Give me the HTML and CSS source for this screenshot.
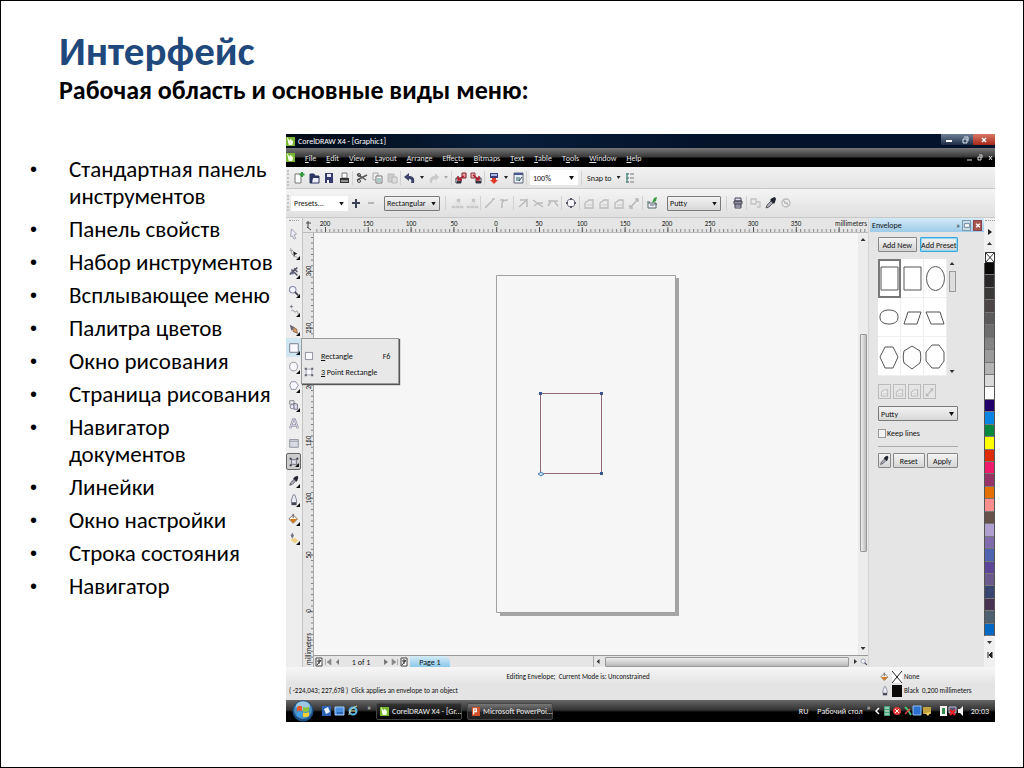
FILE: index.html
```html
<!DOCTYPE html>
<html lang="ru">
<head>
<meta charset="utf-8">
<title>Интерфейс</title>
<link rel="stylesheet" href="styles.css">
</head>
<body>
<svg class="sprite" aria-hidden="true">
  <symbol id="new" viewBox="0 0 14 14"><path d="M3 3h6v9H3z" fill="#fff" stroke="#777"/><path d="M10 1v5M7.500 3.500h5" stroke="#2c9a35" stroke-width="2"/></symbol>
  <symbol id="open" viewBox="0 0 14 14"><path d="M3 12V3h4l1 2h4v7z" fill="#2b3560"/><path d="M6 7h6v5H5z" fill="#eef"/><path d="M3 12V3h4l1 2h4v7z" fill="none" stroke="#2b3560"/></symbol>
  <symbol id="save" viewBox="0 0 14 14"><path d="M3 2h8v10H3z" fill="#33386e"/><path d="M5 3h4v3H5z" fill="#e8e8f5"/><path d="M5 9h2v3H5z" fill="#fff"/></symbol>
  <symbol id="print" viewBox="0 0 14 14"><path d="M5 2h5v5H5z" fill="#fff" stroke="#777"/><path d="M3 7h9v5H3z" fill="#333"/><path d="M4 10h7" stroke="#eee"/></symbol>
  <symbol id="cut" viewBox="0 0 14 14"><path d="M2 3l9 6M2 9l10-5" stroke="#555" stroke-width="1.500"/><circle cx="4" cy="4" r="1.500" fill="none" stroke="#444"/><circle cx="4" cy="10" r="1.500" fill="none" stroke="#444"/></symbol>
  <symbol id="copy" viewBox="0 0 14 14"><path d="M3 2h5v7H3z" fill="#eee" stroke="#aaa"/><path d="M6 5h6v7H6z" fill="#fff" stroke="#777"/><path d="M7 8h4M7 10h4" stroke="#4a9a8a"/></symbol>
  <symbol id="paste" viewBox="0 0 14 14"><path d="M3 3h6v8H3z" fill="#ccc" stroke="#bbb"/><path d="M7 6h5v6H7z" fill="#ddd" stroke="#b8b8b8"/></symbol>
  <symbol id="undo" viewBox="0 0 14 14"><path d="M1 6l5-4v3c4 0 6 2 5 7h-3c1-3 0-4-2-4v2z" fill="#3a4468"/></symbol>
  <symbol id="redo" viewBox="0 0 14 14"><path d="M12 6L8 2v3C4 5 2 7 3 12h2c0-3 1-4 3-4v2z" fill="#c8cacc"/></symbol>
  <symbol id="import" viewBox="0 0 14 14"><path d="M2 7h5v5H2z" fill="#fff" stroke="#334"/><path d="M8 2h4v5H8z" fill="#f0a0a4" stroke="#70202a"/><path d="M10 5L4 9M4 5v4h4" fill="none" stroke="#b01824" stroke-width="1.500"/><path d="M3 10h4v2H3z" fill="#334"/></symbol>
  <symbol id="export" viewBox="0 0 14 14"><path d="M7 7h5v5H7z" fill="#fff" stroke="#334"/><path d="M2 2h4v5H2z" fill="#f0b4b8" stroke="#8a303a"/><path d="M4 4l6 5M10 5v4H7" fill="none" stroke="#b01824" stroke-width="1.500"/><path d="M7 10h5v2H7z" fill="#334"/></symbol>
  <symbol id="launch" viewBox="0 0 14 14"><path d="M3 2h8v5H3z" fill="#3a3f78"/><path d="M4 3h6v2H4z" fill="#aabbe0"/><path d="M5 7h4v2h2l-4 4-4-4h2z" fill="#e03a28"/></symbol>
  <symbol id="corel" viewBox="0 0 14 14"><path d="M3 2h9v10H3z" fill="#e8edf7" stroke="#667"/><path d="M3 2h9v2H3z" fill="#4a5890"/><path d="M5 6h4v4H5z" fill="#8aa"/><path d="M8 10l3-4" stroke="#345"/></symbol>
  <symbol id="opts" viewBox="0 0 14 14"><path d="M3 3h3M3 7h3M3 11h3M4 2v10" stroke="#5f8f88" stroke-width="1.500"/><path d="M7 3h4M7 7h4M7 11h4" stroke="#777"/></symbol>
  <symbol id="plus" viewBox="0 0 14 14"><path d="M7 3v9M3 7h8" stroke="#3c4055" stroke-width="2"/></symbol>
  <symbol id="minus" viewBox="0 0 14 14"><path d="M4 7h6" stroke="#b5b5b5" stroke-width="2"/></symbol>
  <symbol id="node" viewBox="0 0 14 14"><path d="M2 10h3v2H2zM6 10h3v2H6zM10 10h3v2h-3zM3 11h9M7 3h3v3H7zM5 8h6" fill="#c4c4c4" stroke="#ccc" stroke-width=".6"/></symbol>
  <symbol id="line" viewBox="0 0 14 14"><path d="M3 11l7-7M2 11h2M9 3h3" stroke="#bbb" stroke-width="1.500"/></symbol>
  <symbol id="curve" viewBox="0 0 14 14"><path d="M4 12V8c0-3 2-4 6-4M2 4h4" fill="none" stroke="#bbb" stroke-width="1.500"/></symbol>
  <symbol id="cusp" viewBox="0 0 14 14"><path d="M3 11l8-7v7M4 4h7" fill="none" stroke="#bbb" stroke-width="1.500"/></symbol>
  <symbol id="smooth" viewBox="0 0 14 14"><path d="M2 4l4 3 6 4M3 10l4-3h5" fill="none" stroke="#bbb" stroke-width="1.500"/></symbol>
  <symbol id="sym" viewBox="0 0 14 14"><path d="M2 5h10M2 10l3-5M12 10L8 5" fill="none" stroke="#bbb" stroke-width="1.500"/></symbol>
  <symbol id="tocurve" viewBox="0 0 14 14"><circle cx="7" cy="7" r="4" fill="#f6f6fa" stroke="#778"/><path d="M6 2h2v2H6zM6 10h2v2H6zM2 6h2v2H2zM10 6h2v2h-2z" fill="#556"/></symbol>
  <symbol id="env" viewBox="0 0 14 14"><path d="M3 12V7l4-3h4v8z" fill="#eaeaea" stroke="#bcbcbc" stroke-width="1.300"/><path d="M5 9h6" stroke="#c8c8c8"/></symbol>
  <symbol id="envline" viewBox="0 0 14 14"><path d="M4 11l6-7M3 9v3h3M8 3h3v3" fill="none" stroke="#b8b8b8" stroke-width="1.500"/></symbol>
  <symbol id="keep" viewBox="0 0 14 14"><path d="M3 7v5h8V7zM2 6h3M9 8h3M5 9h4" fill="#eef" stroke="#566"/><path d="M7 7l2-5 3-1-1 4z" fill="#39983d"/></symbol>
  <symbol id="copyenv" viewBox="0 0 14 14"><path d="M4 2h6v3H4zM3 5h8v3H3zM4 8h6v4H4z" fill="#dde" stroke="#445"/><path d="M3 6h8M4 10h6" stroke="#445"/></symbol>
  <symbol id="copygray" viewBox="0 0 14 14"><path d="M2 3h5v5H2zM7 6h4v5H8" fill="none" stroke="#c2c2c2" stroke-width="1.300"/></symbol>
  <symbol id="dropper" viewBox="0 0 14 14"><path d="M2 12l1-3 4-4 2 2-4 4z" fill="#aab" stroke="#444" stroke-width=".8"/><path d="M6 4l4 4 1-2 1-3-1-2-3 1z" fill="#20242e"/></symbol>
  <symbol id="clear" viewBox="0 0 14 14"><circle cx="7" cy="7" r="4" fill="#eee" stroke="#bbb" stroke-width="1.300"/><path d="M4 4l6 6M5 7h4" stroke="#bbb" stroke-width="1.300"/></symbol>
  <symbol id="pick" viewBox="0 0 14 14"><path d="M4 1l6 6-3 1 2 4-2 1-2-4-2 1z" fill="#eef" stroke="#99a"/></symbol>
  <symbol id="shape" viewBox="0 0 14 14"><path d="M3 1l1 5c1 4 3 5 7 6M2 4h4" fill="none" stroke="#999"/><path d="M6 5l5 3-3 1-1 3z" fill="#222"/></symbol>
  <symbol id="crop" viewBox="0 0 14 14"><path d="M2 10l4-4 5-4M4 4l7 7M7 3l4 4" stroke="#556" stroke-width="1.800"/><circle cx="5" cy="8" r="2" fill="#668"/></symbol>
  <symbol id="zoom" viewBox="0 0 14 14"><circle cx="5.500" cy="5.500" r="3.800" fill="#f3f6ff" stroke="#88a" stroke-width="1.200"/><path d="M8 8l4 4" stroke="#445" stroke-width="2"/></symbol>
  <symbol id="free" viewBox="0 0 14 14"><path d="M2 3h4M4 1v4M4 8c3-3 3 3 5 1s2 0 3 3" fill="none" stroke="#778"/></symbol>
  <symbol id="smart" viewBox="0 0 14 14"><path d="M2 2l6 3-4 4z" fill="#667"/><path d="M6 5l4 2 1 5-5-2z" fill="#d09a60" stroke="#865"/></symbol>
  <symbol id="rect" viewBox="0 0 14 14"><path d="M2 2h10v10H2z" fill="#f8f8ff" stroke="#6d7080"/></symbol>
  <symbol id="rect3" viewBox="0 0 14 14"><path d="M3 3h8v8H3z" fill="#f8f8ff" stroke="#8a8a98"/><path d="M1 1h3v3H1zM10 1h3v3h-3zM1 10h3v3H1zM10 10h3v3h-3z" fill="#667"/></symbol>
  <symbol id="ell" viewBox="0 0 14 14"><ellipse cx="6.500" cy="6.500" rx="4.500" ry="5" fill="#fafaff" stroke="#889"/></symbol>
  <symbol id="poly" viewBox="0 0 14 14"><path d="M4 2h5l3 4-3 5H4L2 6z" fill="#f7f7ff" stroke="#889"/></symbol>
  <symbol id="basic" viewBox="0 0 14 14"><path d="M2 2h5v4H2z" fill="#eee" stroke="#778"/><circle cx="5" cy="9" r="2.500" fill="#eef" stroke="#778"/><path d="M7 5l4 1v6H7z" fill="#dde" stroke="#667"/></symbol>
  <symbol id="text" viewBox="0 0 14 14"><path d="M2.500 12L6 2h2l3.500 10M4.500 9h5" fill="none" stroke="#889" stroke-width="2.600"/><path d="M2.500 12L6 2h2l3.500 10M4.500 9h5" fill="none" stroke="#eef"/></symbol>
  <symbol id="table" viewBox="0 0 14 14"><path d="M2 3h10v9H2z" fill="#d8dbe2" stroke="#889"/><path d="M2 5h10" stroke="#99a"/></symbol>
  <symbol id="blend" viewBox="0 0 14 14"><path d="M3 3c3 2 5 2 8 0-2 3-2 5 0 8-3-2-5-2-8 0 2-3 2-5 0-8z" fill="#e5e8ee" stroke="#556"/><path d="M2 2h2v2H2zM10 2h2v2h-2zM2 10h2v2H2z" fill="#334"/></symbol>
  <symbol id="pen" viewBox="0 0 14 14"><path d="M6 1h2l2 6v3H4V7z" fill="#e9ebf3" stroke="#778"/><path d="M4 10h6v3H4z" fill="#445"/></symbol>
  <symbol id="fill" viewBox="0 0 14 14"><path d="M6 2l5 5-5 5-5-5z" fill="#f8f3ec" stroke="#765"/><path d="M2 7h9l-5 5z" fill="#d07a20"/><path d="M6 1v5" stroke="#444"/></symbol>
  <symbol id="ifill" viewBox="0 0 14 14"><path d="M5 1l2 3-2 4-2-4z" fill="#778"/><path d="M3 9l5-2 4 3-4 3z" fill="#f0d080"/></symbol>
  <symbol id="cd" viewBox="0 0 10 12"><path d="M0 1h10v10H0z" fill="#78b832"/><path d="M1 1l3 4 1-2 3 3-1 4H3z" fill="#f5ffe8"/></symbol>
  <symbol id="page" viewBox="0 0 8 10"><path d="M1 1h6v8H1z" fill="#fff" stroke="#444"/><path d="M2 4h4M4 2v5M2 8l4-5" stroke="#333"/></symbol>
</svg>

<main class="slide">
  <header class="heading">
    <h1>Интерфейс</h1>
    <h2>Рабочая область и основные виды меню:</h2>
  </header>
  <div class="body">
    <ul class="topics">
      <li>Стандартная панель инструментов</li>
      <li>Панель свойств</li>
      <li>Набор инструментов</li>
      <li>Всплывающее меню</li>
      <li>Палитра цветов</li>
      <li>Окно рисования</li>
      <li>Страница рисования</li>
      <li>Навигатор документов</li>
      <li>Линейки</li>
      <li>Окно настройки</li>
      <li>Строка состояния</li>
      <li>Навигатор</li>
    </ul>

    <section class="app" aria-label="CorelDRAW X4">
      <div class="titlebar">
        <svg class="logo"><use href="#cd"/></svg>
        <span class="grow">CorelDRAW X4 - [Graphic1]</span>
        <div class="winbtns">
          <button aria-label="Minimize"><svg viewBox="0 0 10 8"><path d="M2 5h6" stroke="#fff" stroke-width="2"/></svg></button>
          <button aria-label="Restore"><svg viewBox="0 0 10 8"><path d="M4 1h4v4M3 3h4v4H3z" fill="none" stroke="#dfe8f4"/></svg></button>
          <button class="close" aria-label="Close"><svg viewBox="0 0 10 8"><path d="M3 2l4 4M7 2L3 6" stroke="#fff" stroke-width="1.500"/></svg></button>
        </div>
      </div>
      <nav class="menubar">
        <svg class="logo"><use href="#cd"/></svg>
        <button><u>F</u>ile</button><button><u>E</u>dit</button><button><u>V</u>iew</button><button><u>L</u>ayout</button><button><u>A</u>rrange</button><button>Effe<u>c</u>ts</button><button><u>B</u>itmaps</button><button><u>T</u>ext</button><button><u>T</u>able</button><button>T<u>o</u>ols</button><button><u>W</u>indow</button><button><u>H</u>elp</button>
        <svg class="docbtns" viewBox="0 0 30 10"><path d="M2 7h5M24 3l3 4M27 3l-3 4M13 4h3v3h-3zM14 2h3v3" fill="none" stroke="#ddd"/></svg>
      </nav>
      <div class="toolbar">
        <i class="grip"></i>
        <button class="tb" aria-label="New"><svg><use href="#new"/></svg></button><button class="tb" aria-label="Open"><svg><use href="#open"/></svg></button><button class="tb" aria-label="Save"><svg><use href="#save"/></svg></button><button class="tb" aria-label="Print"><svg><use href="#print"/></svg></button>
        <i class="sep"></i>
        <button class="tb" aria-label="Cut"><svg><use href="#cut"/></svg></button><button class="tb" aria-label="Copy"><svg><use href="#copy"/></svg></button><button class="tb" aria-label="Paste"><svg><use href="#paste"/></svg></button>
        <i class="sep"></i>
        <button class="tb" aria-label="Undo"><svg><use href="#undo"/></svg></button><i class="caret"></i><button class="tb" aria-label="Redo"><svg><use href="#redo"/></svg></button><i class="caret dim"></i>
        <i class="sep"></i>
        <button class="tb" aria-label="Import"><svg><use href="#import"/></svg></button><button class="tb" aria-label="Export"><svg><use href="#export"/></svg></button>
        <i class="sep"></i>
        <button class="tb" aria-label="Launcher"><svg><use href="#launch"/></svg></button><i class="caret"></i><button class="tb" aria-label="Welcome screen"><svg><use href="#corel"/></svg></button>
        <i class="sep"></i>
        <span class="combo plain zoomlevel"><select aria-label="Zoom level"><option>100%</option></select></span>
        <i class="sep"></i>
        <button class="snap">Snap to</button><i class="caret"></i>
        <button class="tb" aria-label="Options"><svg><use href="#opts"/></svg></button>
      </div>
      <div class="toolbar props">
        <i class="grip"></i>
        <span class="combo plain presets"><select aria-label="Preset list"><option>Presets...</option></select></span>
        <button class="tb" aria-label="Add preset"><svg><use href="#plus"/></svg></button><button class="tb" aria-label="Delete preset"><svg><use href="#minus"/></svg></button>
        <span class="combo mode"><select aria-label="Selection mode"><option>Rectangular</option></select></span>
        <i class="sep wide"></i>
        <button class="tb" aria-label="Add node"><svg><use href="#node"/></svg></button><button class="tb" aria-label="Delete node"><svg><use href="#node"/></svg></button>
        <i class="sep"></i>
        <button class="tb" aria-label="To line"><svg><use href="#line"/></svg></button><button class="tb" aria-label="To curve"><svg><use href="#curve"/></svg></button>
        <i class="sep"></i>
        <button class="tb" aria-label="Cusp"><svg><use href="#cusp"/></svg></button><button class="tb" aria-label="Smooth"><svg><use href="#smooth"/></svg></button><button class="tb" aria-label="Symmetrical"><svg><use href="#sym"/></svg></button>
        <i class="sep"></i>
        <button class="tb" aria-label="Convert to curves"><svg><use href="#tocurve"/></svg></button>
        <i class="sep"></i>
        <button class="tb" aria-label="Straight line mode"><svg><use href="#env"/></svg></button><button class="tb" aria-label="Single arc mode"><svg><use href="#env"/></svg></button><button class="tb" aria-label="Double arc mode"><svg><use href="#env"/></svg></button><button class="tb" aria-label="Unconstrained mode"><svg><use href="#envline"/></svg></button>
        <i class="sep"></i>
        <button class="tb" aria-label="Add new envelope"><svg><use href="#keep"/></svg></button>
        <span class="combo map"><select aria-label="Mapping mode"><option>Putty</option></select></span>
        <i class="sep wide"></i>
        <button class="tb" aria-label="Keep lines"><svg><use href="#copyenv"/></svg></button>
        <i class="sep"></i>
        <button class="tb" aria-label="Copy envelope"><svg><use href="#copygray"/></svg></button><button class="tb" aria-label="Create envelope from"><svg><use href="#dropper"/></svg></button><button class="tb" aria-label="Clear envelope"><svg><use href="#clear"/></svg></button>
      </div>

      <div class="workspace">
        <div class="toolbox">
          <i class="hgrip"></i>
          <button aria-label="Pick"><svg><use href="#pick"/></svg></button>
          <button class="more" aria-label="Shape"><svg><use href="#shape"/></svg></button>
          <button class="more" aria-label="Crop"><svg><use href="#crop"/></svg></button>
          <button class="more" aria-label="Zoom"><svg><use href="#zoom"/></svg></button>
          <button class="more" aria-label="Freehand"><svg><use href="#free"/></svg></button>
          <button class="more" aria-label="Smart fill"><svg><use href="#smart"/></svg></button>
          <div class="anchor">
            <button class="more active" aria-label="Rectangle tool"><svg><use href="#rect"/></svg></button>
            <div class="flyout">
              <button><svg><use href="#rect"/></svg><span><u>R</u>ectangle</span><kbd>F6</kbd></button>
              <button><svg><use href="#rect3"/></svg><span><u>3</u> Point Rectangle</span></button>
            </div>
          </div>
          <button class="more" aria-label="Ellipse"><svg><use href="#ell"/></svg></button>
          <button class="more" aria-label="Polygon"><svg><use href="#poly"/></svg></button>
          <button class="more" aria-label="Basic shapes"><svg><use href="#basic"/></svg></button>
          <button aria-label="Text"><svg><use href="#text"/></svg></button>
          <button aria-label="Table"><svg><use href="#table"/></svg></button>
          <button class="more pressed" aria-label="Interactive envelope"><svg><use href="#blend"/></svg></button>
          <button class="more" aria-label="Eyedropper"><svg><use href="#dropper"/></svg></button>
          <button class="more" aria-label="Outline"><svg><use href="#pen"/></svg></button>
          <button class="more" aria-label="Fill"><svg><use href="#fill"/></svg></button>
          <button class="more" aria-label="Interactive fill"><svg><use href="#ifill"/></svg></button>
        </div>

        <svg class="hruler">
          <defs>
            <pattern id="ht" x="22" y="0" width="4.280" height="15" patternUnits="userSpaceOnUse"><path d="M.5 11v3" stroke="#888"/></pattern>
            <pattern id="hm" x="22" y="0" width="42.800" height="15" patternUnits="userSpaceOnUse"><path d="M.5 9v5" stroke="#555"/></pattern>
          </defs>
          <path d="M3 5h5M5 3v7M4 9l4 3" fill="none" stroke="#444"/>
          <rect x="11" width="100%" height="15" fill="url(#ht)"/><rect x="11" width="100%" height="15" fill="url(#hm)"/>
          <g class="rl"><text x="22" y="8">200</text><text x="65" y="8">150</text><text x="108" y="8">100</text><text x="151" y="8">50</text><text x="193" y="8">0</text><text x="236" y="8">50</text><text x="279" y="8">100</text><text x="322" y="8">150</text><text x="364" y="8">200</text><text x="407" y="8">250</text><text x="450" y="8">300</text><text x="493" y="8">350</text><text x="548" y="8">millimeters</text></g>
        </svg>
        <svg class="vruler">
          <defs>
            <pattern id="vt" x="0" y="38" width="11" height="5.670" patternUnits="userSpaceOnUse"><path d="M8 .5h2" stroke="#777"/></pattern>
            <pattern id="vm" x="0" y="38" width="11" height="56.700" patternUnits="userSpaceOnUse"><path d="M5 .5h5" stroke="#777"/></pattern>
          </defs>
          <rect width="11" height="100%" fill="url(#vt)"/><rect width="11" height="100%" fill="url(#vm)"/>
          <path d="M10.500 0v2000" stroke="#aaa"/>
          <g class="rl"><text transform="translate(8 38) rotate(-90)">300</text><text transform="translate(8 95) rotate(-90)">250</text><text transform="translate(8 151) rotate(-90)">200</text><text transform="translate(8 208) rotate(-90)">150</text><text transform="translate(8 265) rotate(-90)">100</text><text transform="translate(8 322) rotate(-90)">50</text><text transform="translate(8 378) rotate(-90)">0</text><text transform="translate(8 416) rotate(-90)">millimeters</text></g>
        </svg>
        <svg class="canvas">
          <path d="M186 45h179v338H186z" fill="#a5a5a5"/>
          <path d="M182.500 42.500h179v337h-179z" fill="#f6f6f6" stroke="#a0a0a0"/>
          <path d="M226.500 160.500h61v80h-61z" fill="none" stroke="#8f6a78"/>
          <path d="M225 159h3v3h-3zM286 159h3v3h-3zM286 239h3v3h-3z" fill="#3b5590"/>
          <path d="M224 241l3-2 3 2-3 2z" fill="#bfe0f5" stroke="#4a80b0"/>
        </svg>
        <div class="vscroll"><i class="up"></i><i class="thumb"></i><i class="down"></i></div>
        <div class="navigator">
          <button aria-label="Add page before"><svg viewBox="0 0 8 10"><use href="#page"/></svg></button>
          <button aria-label="First page"><svg viewBox="0 0 8 10"><path d="M1.500 2v6M7 2v6L3 5z" fill="#888" stroke="#888" stroke-width=".6"/></svg></button>
          <button aria-label="Previous page"><svg viewBox="0 0 8 10"><path d="M6 2v6L3 5z" fill="#777"/></svg></button>
          <output>1 of 1</output>
          <button aria-label="Next page"><svg viewBox="0 0 8 10"><path d="M2 2v6l4-3z" fill="#777"/></svg></button>
          <button aria-label="Last page"><svg viewBox="0 0 8 10"><path d="M6.500 2v6M1 2v6l4-3z" fill="#888" stroke="#888" stroke-width=".6"/></svg></button>
          <button aria-label="Add page after"><svg viewBox="0 0 8 10"><use href="#page"/></svg></button>
          <button class="tab">Page 1</button>
          <i class="trough"></i>
          <i class="left"></i><i class="hthumb"></i><i class="right"></i>
          <button aria-label="Navigator"><svg viewBox="0 0 14 14"><use href="#zoom"/></svg></button>
        </div>

        <aside class="docker">
          <div class="dockhead"><span class="grow">Envelope</span><span>»</span><button aria-label="Roll up"><svg viewBox="0 0 8 10"><path d="M1 3h6v4H1z" fill="#fff" stroke="#5a7890"/></svg></button><button class="close" aria-label="Close"><svg viewBox="0 0 8 10"><path d="M2 3l4 4M6 3L2 7" stroke="#fff" stroke-width="1.500"/></svg></button></div>
          <div class="dockbody">
            <div class="pair"><button class="btn">Add New</button><button class="btn focus">Add Preset</button></div>
            <div class="gallery">
              <div class="shapes">
                <button class="chosen" aria-label="Rectangle"><svg viewBox="0 0 23 39"><path d="M3 8h17v23H3z"/></svg></button>
                <button aria-label="Box"><svg viewBox="0 0 23 39"><path d="M3 8h17v23H3z"/></svg></button>
                <button aria-label="Oval"><svg viewBox="0 0 23 39"><ellipse cx="11.500" cy="19.500" rx="9" ry="12"/></svg></button>
                <button aria-label="Rounded"><svg viewBox="0 0 23 39"><rect x="2" y="12" width="18" height="14" rx="8" ry="6"/></svg></button>
                <button aria-label="Slant right"><svg viewBox="0 0 23 39"><path d="M7 14h13l-4 12H3z"/></svg></button>
                <button aria-label="Slant left"><svg viewBox="0 0 23 39"><path d="M2 14h14l4 12H7z"/></svg></button>
                <button aria-label="Hexagon"><svg viewBox="0 0 23 39"><path d="M7 10h8l5 10-5 11H7L2 20z"/></svg></button>
                <button aria-label="Barrel"><svg viewBox="0 0 23 39"><path d="M11 9l8 5c1 4 1 8 0 12l-8 6-8-6c-1-4-1-8 0-12z"/></svg></button>
                <button aria-label="Octagon"><svg viewBox="0 0 23 39"><path d="M8 8h7l5 7v9l-5 7H8l-6-7v-9z"/></svg></button>
              </div>
              <div class="gscroll"><i class="up"></i><i class="thumb"></i><i class="down"></i></div>
            </div>
            <div class="modes"><button aria-label="Straight"><svg><use href="#env"/></svg></button><button aria-label="Arc"><svg><use href="#env"/></svg></button><button aria-label="Double arc"><svg><use href="#env"/></svg></button><button aria-label="Free"><svg><use href="#envline"/></svg></button></div>
            <span class="combo"><select aria-label="Mapping"><option>Putty</option></select></span>
            <label class="keep"><input type="checkbox">Keep lines</label>
            <hr>
            <div class="actions"><button class="btn pickbtn" aria-label="Pick from object"><svg><use href="#dropper"/></svg></button><button class="btn">Reset</button><button class="btn">Apply</button></div>
          </div>
        </aside>

        <div class="palette">
          <i class="hgrip"></i>
          <button class="pmenu" aria-label="Palette menu"><svg viewBox="0 0 10 12"><path d="M3 3v6l4-3z" fill="#222"/></svg></button>
          <i class="up"></i>
          <button class="none" aria-label="No colour"><svg viewBox="0 0 10 11"><path d="M.5.5h9v10h-9zl9 10M9.500.5l-9 10" fill="#fff" stroke="#333"/></svg></button>
          <div class="swatches">
            <i style="background:#0b0908"></i><i style="background:#2a2828"></i><i style="background:#3b3838"></i><i style="background:#4b4545"></i><i style="background:#5c5a5a"></i><i style="background:#6e6e6e"></i><i style="background:#848484"></i><i style="background:#9a9a9a"></i><i style="background:#b4b4b4"></i><i style="background:#dadada"></i><i style="background:#ffffff"></i><i style="background:#200068"></i><i style="background:#0a84e2"></i><i style="background:#0a893e"></i><i style="background:#ffff00"></i><i style="background:#dd2c00"></i><i style="background:#ee1a6c"></i><i style="background:#963468"></i><i style="background:#e47000"></i><i style="background:#fa8d8d"></i><i style="background:#65524a"></i><i style="background:#b0a0d0"></i><i style="background:#806cac"></i><i style="background:#5063ae"></i><i style="background:#5b4698"></i><i style="background:#6b5b8c"></i><i style="background:#3a4672"></i><i style="background:#473250"></i><i style="background:#4f606f"></i><i style="background:#0068c2"></i>
          </div>
          <i class="down"></i>
          <button class="pend" aria-label="Expand palette"><svg viewBox="0 0 10 12"><path d="M3 3v6M7 3v6L4 6z" fill="#222" stroke="#222"/></svg></button>
        </div>
      </div>

      <div class="status">
        <div class="statustext"><p class="mid">Editing Envelope;&nbsp; Current Mode is: Unconstrained</p><p>( -224,043; 227,678 )&nbsp; Click applies an envelope to an object</p></div>
        <div class="statusfill">
          <p><svg><use href="#fill"/></svg><svg viewBox="0 0 10 12"><path d="M0 0h10v12H0z" fill="#fff"/><path d="M0 0l10 12M10 0L0 12" stroke="#222"/></svg>None</p>
          <p><svg><use href="#pen"/></svg><svg viewBox="0 0 10 12"><path d="M0 0h10v12H0z" fill="#0c0a08"/></svg>Black&nbsp; 0,200 millimeters</p>
        </div>
      </div>

      <div class="taskbar">
        <button class="start" aria-label="Start"><svg viewBox="0 0 22 22"><circle cx="11" cy="11" r="10.500" fill="#1c4f86"/><circle cx="11" cy="10" r="9" fill="#4c8fc0"/><ellipse cx="11" cy="6" rx="7" ry="4.500" fill="#9cc8e4"/><path d="M5 7q3-2 5-.5V11q-3-1-5 .5z" fill="#e8582a"/><path d="M11 7q3 1 6-.5V11q-3 1.500-6 .5z" fill="#8cc63f"/><path d="M5 12.500q3-1.500 5 0V17q-3-1.500-5 0z" fill="#3fa0e8"/><path d="M11 12.500q3 1 6-.5V16q-3 1.500-6 .8z" fill="#fbd030"/></svg></button>
        <svg class="quick" viewBox="0 0 38 12"><path d="M1 1h9v10H1z" fill="#2b62b8"/><path d="M3 4l4-2 2 5-4 2z" fill="#e8f0ff"/><path d="M14 2h9v8h-9z" fill="#4a90e0" stroke="#a8d0ff"/><path d="M16 8h6" stroke="#113a80"/><circle cx="32" cy="6" r="3.500" fill="none" stroke="#58b8ec" stroke-width="2"/><path d="M29 6h6M28 10c0-4 4-8 8-9" stroke="#d8e8b0" fill="none"/></svg>
        <span class="chev">»</span>
        <button class="task current"><svg class="logo"><use href="#cd"/></svg>CorelDRAW X4 - [Gr...</button>
        <button class="task"><svg class="logo" viewBox="0 0 10 12"><path d="M1 1h9v10H1z" fill="#d0502a"/><path d="M3 9V3h3v3H4" fill="none" stroke="#fff" stroke-width="1.500"/></svg>Microsoft PowerPoi...</button>
        <span class="grow"></span>
        <span class="lang">RU</span><span class="desk">Рабочий стол</span><span class="chev">»</span>
        <svg class="tray" viewBox="0 0 88 12"><path d="M4 3L1 6l3 3" fill="none" stroke="#fff" stroke-width="1.500"/><path d="M9 1h6v10H9z" fill="#49a078"/><path d="M10 3h4M10 6h4M10 9h4" stroke="#dff5e8"/><circle cx="22" cy="6" r="4" fill="#e33a3a"/><path d="M20 4l4 4M24 4l-4 4" stroke="#fff"/><path d="M30 2l3 3 3 5" stroke="#4cc070" stroke-width="2"/><path d="M30 9l5-5" stroke="#e44" stroke-width="1.500"/><path d="M38 1h8v9h-8z" fill="#2d70d0" stroke="#90c0f0"/><path d="M48 2h8v7h-8z" fill="#c0a040"/><path d="M50 8l3 3 3-4" fill="#f0d060"/><path d="M65 1h7v10h-7z" fill="#f4f4f4"/><path d="M67 3h3v6h-3z" fill="#388a4c"/><path d="M74 2h7v6h-7z" fill="#557" stroke="#bbc"/><path d="M75 5l5 5M80 5l-5 5" stroke="#f02020" stroke-width="2"/><path d="M83 4h2l3-3v10l-3-3h-2z" fill="#f4f4f4"/></svg>
        <time>20:03</time>
      </div>
    </section>
  </div>
</main>
</body>
</html>
```
FILE: styles.css
```css
* { box-sizing: border-box; }
body { margin: 0; background: #fff; font-family: Carlito, Calibri, "Open Sans", sans-serif; color: #000; }
h1, h2, p, ul { margin: 0; padding: 0; }
button { border: 0; padding: 0; margin: 0; background: none; font: inherit; color: inherit; display: flex; align-items: center; justify-content: center; }
svg { display: block; flex: none; }
i { display: block; flex: none; }
.sprite { display: none; }
.grow { flex: 1; }

.slide { min-height: 100vh; border: 1px solid #000; display: flex; flex-direction: column; padding: 26px 28px 45px 29px; }
.heading { padding-left: 29px; }
h1 { font-size: 41px; line-height: 48px; color: #1f497d; }
h2 { font-size: 26px; line-height: 30px; }
.body { flex: 1; display: flex; margin-top: 29px; }
.topics { width: 256px; flex: none; list-style: none; padding-top: 22px; font-size: 23px; line-height: 27px; }
.topics li { margin-bottom: 6px; padding-left: 39px; position: relative; }
.topics li::before { content: "•"; position: absolute; left: 0; top: 0; font-family: "Liberation Sans", sans-serif; font-size: 20px; }

.app { flex: 1; min-width: 0; display: flex; flex-direction: column; background: #e5e5e5; font: 8px/10px Carlito, Calibri, "Liberation Sans", sans-serif; color: #111; white-space: nowrap; }
.logo { width: 9px; height: 11px; }
.titlebar { height: 14px; flex: none; display: flex; align-items: center; gap: 3px; color: #fff; background: linear-gradient(90deg, #020a16, #071e3a 30%, #04122a 60%, #03132b); }
.winbtns { display: flex; align-self: flex-start; }
.winbtns button { width: 16px; height: 11px; background: linear-gradient(#6f7f96, #1c2c44); }
.winbtns svg { width: 10px; height: 8px; }
.winbtns .close { width: 22px; background: linear-gradient(#d87868, #a82818); }
.menubar { height: 19px; flex: none; display: flex; align-items: center; gap: 10px; color: #e4e4e4; background: linear-gradient(#777, #3a3a3a 45%, #000 55%, #000); }
.docbtns { width: 30px; height: 10px; margin-left: auto; }

.toolbar { height: 22px; flex: none; display: flex; align-items: center; overflow: hidden; background: linear-gradient(#f2f2f2, #e4e4e4); border-bottom: 1px solid #c8c8c8; }
.props { height: 29px; background: linear-gradient(#f4f4f4, #e0e0e0); }
.grip { width: 2px; height: 16px; margin: 0 2px 0 1px; border-left: 2px dotted #c4c4c4; }
.hgrip { width: 10px; height: 2px; margin: 2px auto; border-top: 1px dotted #999; }
.sep { width: 1px; height: 14px; margin: 0 1px; background: #d2d2d2; }
.sep.wide { margin: 0 3px 0 5px; }
.tb { width: 15px; height: 16px; flex: none; }
.tb svg { width: 14px; height: 14px; }
.caret { width: 4px; height: 3px; margin: 0 2px 0 3px; background: #222; clip-path: polygon(0 0, 100% 0, 50% 100%); }
.caret.dim { background: #aaa; }
.combo { position: relative; display: block; flex: none; }
.combo select { appearance: none; display: block; width: 100%; height: 15px; margin: 0; padding: 0 2px; border: 1px solid #7a7a7a; border-radius: 1px; background: linear-gradient(#f2f2f2, #d8d8d8); font: inherit; color: #111; }
.combo::after { content: ""; position: absolute; right: 4px; top: 6px; width: 5px; height: 4px; background: #111; clip-path: polygon(0 0, 100% 0, 50% 100%); pointer-events: none; }
.plain select { border-color: #fff; background: #fff; }
.zoomlevel { width: 48px; margin: 0 2px; }
.presets { width: 57px; }
.mode { width: 56px; margin-left: 6px; }
.map { width: 54px; margin-left: 8px; }
.snap { margin: 0 2px 0 4px; }

.workspace { flex: 1; display: grid; grid-template-columns: 17px 11px 1fr 10px 116px 11px; grid-template-rows: 15px 1fr 12px; }
.toolbox { grid-row: 1 / 4; border-right: 1px solid #c4c4c4; background: #eee; }
.toolbox button { position: relative; width: 15px; height: 19px; }
.toolbox svg { width: 12px; height: 12px; }
.more::after { content: ""; position: absolute; right: 1px; bottom: 2px; width: 4px; height: 4px; background: #111; clip-path: polygon(100% 0, 100% 100%, 0 100%); }
.toolbox .active { background: #cfe6f2; }
.toolbox .pressed { background: #ccc; border: 1px solid #666; border-radius: 2px; height: 17px; margin: 1px 0; }
.anchor { position: relative; height: 19px; }
.flyout { position: absolute; z-index: 2; left: 15px; top: 0; width: 98px; padding: 9px 4px 3px 2px; background: #e8e8e8; border: 1px solid #999; box-shadow: 1px 1px 1px #555; }
.toolbox .flyout button { width: 100%; height: 16px; justify-content: flex-start; gap: 7px; }
.flyout span { flex: 1; text-align: left; }
.flyout svg { width: 10px; }
.flyout kbd { font: inherit; width: 15px; }
.hruler { grid-column: 2 / 5; grid-row: 1; width: 100%; height: 15px; border-bottom: 1px solid #bbb; }
.vruler { grid-column: 2; grid-row: 2 / 4; width: 11px; height: 100%; overflow: hidden; }
.rl { font-size: 7px; text-anchor: middle; fill: #222; }
.canvas { grid-column: 3; grid-row: 2; width: 100%; height: 100%; background: #f6f6f6; }
.up, .down, .left, .right { width: 5px; height: 3px; background: #333; clip-path: polygon(50% 0, 100% 100%, 0 100%); }
.down { clip-path: polygon(0 0, 100% 0, 50% 100%); }
.left, .right { width: 3px; height: 5px; clip-path: polygon(100% 0, 100% 100%, 0 50%); }
.right { clip-path: polygon(0 0, 100% 50%, 0 100%); }
.vscroll { grid-column: 4; grid-row: 2; display: flex; flex-direction: column; align-items: center; padding: 5px 0; background: #ececec; }
.vscroll .thumb { width: 7px; height: 218px; margin-top: 93px; margin-bottom: auto; background: linear-gradient(90deg, #eee, #bbb); border: 1px solid #999; border-radius: 1px; }
.navigator { grid-column: 3 / 5; grid-row: 3; display: flex; align-items: center; border-top: 1px solid #999; }
.navigator button { width: 9px; height: 11px; flex: none; }
.navigator svg { width: 8px; height: 10px; }
.navigator output { width: 40px; text-align: center; }
.navigator .tab { width: 40px; margin-left: 2px; background: linear-gradient(#d4ecf8, #8cc8e8); border-top-right-radius: 6px; }
.trough { flex: 144; height: 11px; border-right: 1px solid #aaa; margin-right: 3px; }
.hthumb { flex: 245; height: 10px; margin: 0 5px; background: linear-gradient(#eee, #b8b8b8); border: 1px solid #999; border-radius: 1px; }
.navigator .right { margin-right: 2px; }

.docker { grid-row: 1 / 4; grid-column: 5; border-left: 1px solid #d4d4d4; padding-left: 1px; }
.dockhead { height: 14px; display: flex; align-items: center; gap: 2px; padding: 0 2px; background: linear-gradient(#d4eaf8, #9ccbe8); }
.dockhead button { width: 9px; height: 11px; border: 1px solid #7f98aa; background: #c8dcea; }
.dockhead svg { width: 8px; height: 9px; }
.dockhead .close { background: #a85850; border-color: #844; }
.dockbody { width: 88px; padding: 5px 0 0 8px; }
.pair { display: flex; gap: 3px; }
.btn { flex: 1; height: 15px; border: 1px solid #888; border-radius: 1px; background: linear-gradient(#f4f4f4, #d4d4d4); }
.focus { border-color: #38a8dc; box-shadow: inset 0 0 1px 1px #8cd4f4; }
.gallery { display: flex; margin-top: 7px; }
.shapes { display: grid; grid-template-columns: repeat(3, 23px); background: #fff; gap: 0; }
.shapes button { height: 39px; border: solid #eee; border-width: 0 1px 1px 0; }
.shapes svg { width: 23px; height: 39px; fill: none; stroke: #555; }
.shapes .chosen { outline: 2px solid #777; outline-offset: -2px; }
.gscroll { width: 10px; display: flex; flex-direction: column; align-items: center; padding: 3px 0; }
.gscroll .thumb { width: 7px; height: 21px; margin-top: 6px; margin-bottom: auto; background: #ddd; border: 1px solid #999; }
.modes { display: flex; gap: 2px; margin: 8px 0 7px; }
.modes button { width: 13px; height: 15px; border: 1px solid #bbb; }
.modes svg { width: 11px; height: 12px; }
.keep { display: flex; align-items: center; height: 10px; margin-top: 7px; }
.keep input { appearance: none; width: 8px; height: 9px; margin: 0 1px 0 0; border: 1px solid #999; background: #f2f2f2; }
.dockbody hr { border: 0; border-top: 1px solid #aaa; margin: 8px 0 6px; }
.actions { display: flex; gap: 2px; }
.actions .pickbtn { flex: none; width: 13px; }
.pickbtn svg { width: 11px; height: 11px; }

.palette { grid-row: 1 / 4; grid-column: 6; display: flex; flex-direction: column; align-items: center; background: #f0f0f0; }
.palette button { width: 10px; height: 12px; flex: none; }
.palette .hgrip { margin-bottom: 4px; }
.pmenu svg, .pend svg { width: 10px; height: 12px; }
.palette .up { margin: 4px 0 6px; }
.none svg { width: 10px; height: 11px; }
.swatches { flex: 1; width: 11px; display: flex; flex-direction: column; border: 1px solid #555; border-width: 0 1px; }
.swatches i { flex: 1; border-bottom: 1px solid #777; }
.palette .down { margin: 5px 0; }
.palette .pend { margin-bottom: 6px; }

.status { height: 33px; flex: none; display: flex; font-size: 7px; background: linear-gradient(#f6f6f6, #e4e4e4 50%); }
.statustext { flex: 1; padding: 3px 3px 0; }
.statustext p { line-height: 14px; height: 14px; }
.statustext .mid { padding-left: 37%; }
.statusfill { width: 115px; padding-top: 3px; }
.statusfill p { display: flex; align-items: center; gap: 2px; height: 14px; }
.statusfill svg { width: 10px; height: 12px; }

.taskbar { height: 22px; flex: none; display: flex; align-items: center; padding: 0 6px; color: #eee; background: linear-gradient(#666, #333 45%, #000 55%, #000); }
.start svg { width: 22px; height: 22px; }
.quick { width: 38px; height: 12px; margin: 0 8px 0 7px; }
.chev { align-self: flex-start; line-height: 14px; }
.task { height: 17px; width: 86px; margin-left: 5px; padding-left: 3px; gap: 3px; justify-content: flex-start; border: 1px solid #444; border-radius: 2px; background: linear-gradient(#777, #444 45%, #222 55%, #222); }
.task.current { background: linear-gradient(#333, #000); }
.lang { margin-right: 9px; }
.desk { margin-right: 4px; }
.tray { width: 88px; height: 12px; margin: 0 8px 0 4px; }
```
